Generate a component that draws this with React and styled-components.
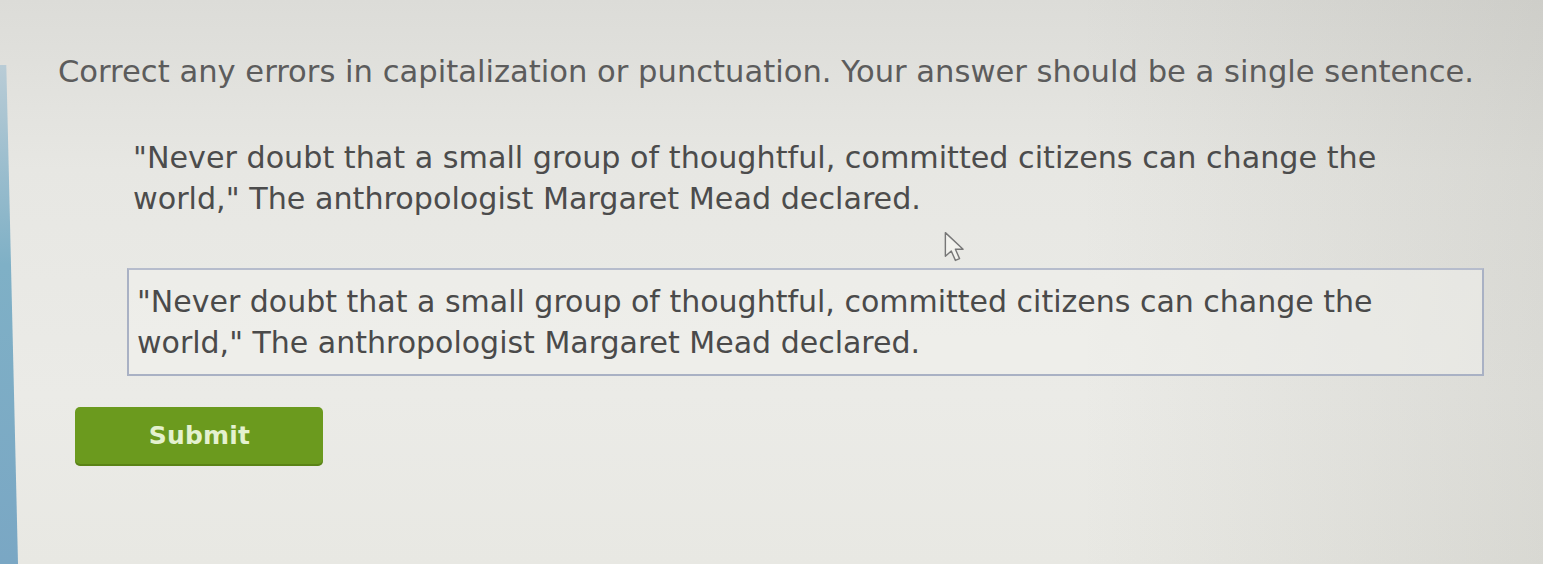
import React from "react";
import styled, { createGlobalStyle } from "styled-components";

const GlobalStyle = createGlobalStyle`
  html, body {
    margin: 0;
    padding: 0;
    height: 100%;
  }
  body {
    font-family: "DejaVu Sans", Verdana, sans-serif;
    background: #e6e6e2;
    overflow: hidden;
  }
`;

const Screen = styled.div`
  position: relative;
  width: 1543px;
  height: 564px;
  box-sizing: border-box;
  padding: 52px 0 0 58px;
  background:
    linear-gradient(90deg, rgba(0,0,0,0) 0%, rgba(0,0,0,0) 70%, rgba(120,120,110,0.14) 100%),
    linear-gradient(180deg, #dcdcd8 0%, #e7e7e3 30%, #ebebe7 70%, #e8e8e3 100%);
  overflow: hidden;
`;

const Bezel = styled.div`
  position: absolute;
  left: 0;
  top: 65px;
  bottom: 0;
  width: 18px;
  background: linear-gradient(180deg, #b9ccd6 0%, #7fb0c6 40%, #7aa7c4 100%);
  clip-path: polygon(0 0, 35% 0, 100% 100%, 0 100%);
`;

const Instruction = styled.p`
  margin: 0;
  font-size: 30.6px;
  line-height: 40px;
  color: #5c5c5c;
  white-space: nowrap;
`;

const Quote = styled.p`
  margin: 44.5px 0 0 75px;
  font-size: 30.2px;
  line-height: 41px;
  color: #4c4c4c;
  white-space: nowrap;
`;

const AnswerBox = styled.div`
  margin: 49.5px 0 0 69px;
  width: 1357px;
  height: 108px;
  box-sizing: border-box;
  padding: 10.5px 8px;
  border: 2px solid #a9b1c4;
  border-top-color: #b6bccc;
  background: rgba(240, 240, 236, 0.55);
  font-size: 30px;
  line-height: 41px;
  color: #4a4a4a;
  white-space: nowrap;
`;

const SubmitButton = styled.button`
  display: flex;
  align-items: center;
  justify-content: center;
  margin: 31px 0 0 17px;
  width: 248px;
  height: 59px;
  padding: 0 0 2px 0;
  border: none;
  border-radius: 5px;
  background: #6b9a1e;
  box-shadow: inset 0 -2px 0 rgba(60, 90, 10, 0.35);
  color: #e4f1cf;
  font-family: "DejaVu Sans", Verdana, sans-serif;
  font-size: 25px;
  font-weight: bold;
  letter-spacing: 0.2px;
  cursor: pointer;
`;

const SubmitLabel = styled.span`
  margin-left: 1px;
`;

const Cursor = styled.svg`
  position: absolute;
  left: 943px;
  top: 230px;
  width: 26px;
  height: 36px;
`;

export default function App() {
  return (
    <>
      <GlobalStyle />
      <Screen>
        <Bezel />
        <Instruction>
          Correct any errors in capitalization or punctuation. Your answer should be a single sentence.
        </Instruction>
        <Quote>
          "Never doubt that a small group of thoughtful, committed citizens can change the
          <br />
          world," The anthropologist Margaret Mead declared.
        </Quote>
        <AnswerBox>
          "Never doubt that a small group of thoughtful, committed citizens can change the
          <br />
          world," The anthropologist Margaret Mead declared.
        </AnswerBox>
        <SubmitButton type="button">
          <SubmitLabel>Submit</SubmitLabel>
        </SubmitButton>
        <Cursor viewBox="0 0 22 30">
          <path
            d="M2 2 L2 22 L7 17.5 L10.5 25.5 L14 24 L10.5 16 L17 16 Z"
            fill="#f2f2ee"
            stroke="#777"
            strokeWidth="1.2"
            strokeLinejoin="round"
          />
        </Cursor>
      </Screen>
    </>
  );
}
